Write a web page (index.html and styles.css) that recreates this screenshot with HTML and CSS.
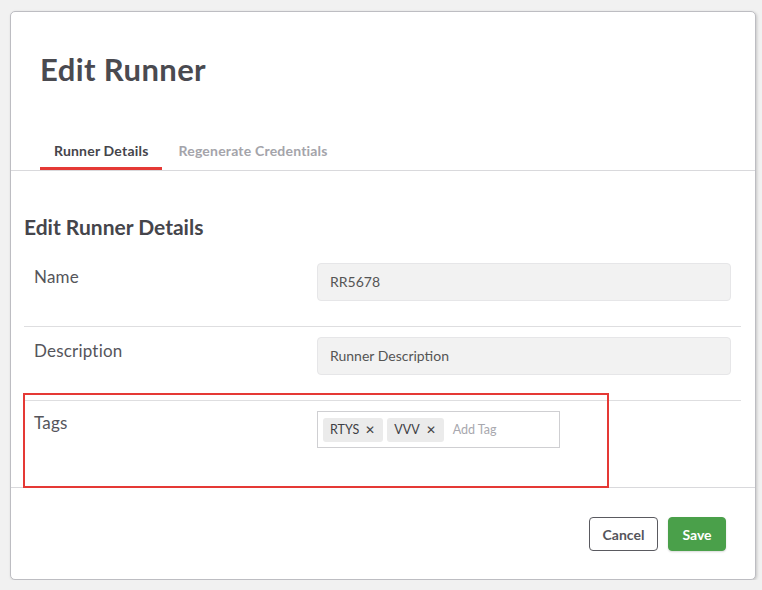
FILE: index.html
```html
<!DOCTYPE html>
<html>
<head>
<meta charset="utf-8">
<link rel="stylesheet" href="styles.css">
</head>
<body>
<div class="card">
  <div class="header">
    <h1 class="title">Edit Runner</h1>
  </div>
  <div class="tabs">
    <div class="tab active">Runner Details</div>
    <div class="tab">Regenerate Credentials</div>
  </div>
  <div class="section">
    <h2 class="section-title">Edit Runner Details</h2>
    <div class="row first">
      <div class="label">Name</div>
      <div class="field">RR5678</div>
    </div>
    <div class="row">
      <div class="label">Description</div>
      <div class="field">Runner Description</div>
    </div>
    <div class="row tags-row">
      <div class="label">Tags</div>
      <div class="tag-input">
        <span class="chip">RTYS <span class="x">✕</span></span>
        <span class="chip">VVV <span class="x">✕</span></span>
        <span class="placeholder">Add Tag</span>
      </div>
      <div class="highlight"></div>
    </div>
  </div>
  <div class="footer">
    <button class="btn cancel">Cancel</button>
    <button class="btn save">Save</button>
  </div>
</div>
</body>
</html>
```

FILE: styles.css
```css
* { box-sizing: border-box; }
html, body { margin: 0; padding: 0; }
body {
  background: #f1f1f1;
  font-family: Lato, "Open Sans", sans-serif;
  color: #555;
  padding: 11px 6px 0 10px;
}
.card {
  width: 746px;
  height: 569px;
  background: #fff;
  border: 1px solid #bdbdc2;
  border-radius: 5px;
  box-shadow: 1px 1px 3px rgba(0,0,0,0.18);
  display: flex;
  flex-direction: column;
}
.header { padding: 38px 0 0 29px; }
.title {
  margin: 0;
  font-size: 31px;
  font-weight: 700;
  line-height: 38px;
  letter-spacing: 0.4px;
  color: #4a4a50;
}
.tabs {
  margin-top: 54px;
  display: flex;
  gap: 2px;
  padding-left: 29px;
  border-bottom: 1px solid #d9d9dc;
}
.tab {
  padding: 0 14px 7px;
  font-size: 14px;
  font-weight: 700;
  line-height: 18px;
  color: #a4a4aa;
  border-bottom: 3px solid transparent;
}
.tab.active {
  color: #45454b;
  letter-spacing: 0.2px;
  border-bottom-color: #e53935;
}
.tab + .tab { padding-left: 14px; letter-spacing: 0.2px; }
.section { padding: 0 14px 0 13px; flex: 1; }
.section-title {
  margin: 43px 0 0 0;
  font-size: 21px;
  font-weight: 700;
  line-height: 26px;
  color: #45454b;
}
.row {
  display: grid;
  grid-template-columns: 293px 1fr;
  padding: 10px 10px 25px 10px;
  border-top: 1px solid #dedee0;
  position: relative;
}
.row.first { border-top: none; padding-top: 11px; margin-top: 12px; }
.label {
  font-size: 17px;
  line-height: 20px;
  letter-spacing: 0.2px;
  color: #55555b;
  margin-top: 4px;
}
.field {
  margin-left: -10px;
  height: 38px;
  background: #f2f2f2;
  border: 1px solid #e6e6e8;
  border-radius: 4px;
  font-size: 14px;
  line-height: 36px;
  padding: 0 12px;
  color: #555;
}
.tags-row { padding-bottom: 25px; }
.tags-row .label { margin-top: 2px; }
.tag-input {
  margin-left: -10px;
  width: 243px;
  height: 37px;
  border: 1px solid #cfcfd2;
  display: flex;
  align-items: center;
  gap: 4px;
  padding: 0 5px;
}
.chip {
  background: #ebebeb;
  border-radius: 3px;
  height: 24px;
  line-height: 24px;
  font-size: 12.5px;
  color: #3e3e44;
  padding: 0 8px 0 7px;
  display: inline-flex;
  align-items: center;
  gap: 6px;
}
.chip .x { font-size: 12px; color: #444; }
.placeholder {
  font-size: 12.5px;
  color: #a8a8ae;
  margin-left: 5px;
}
.highlight {
  position: absolute;
  left: -1px;
  top: -8px;
  width: 586px;
  height: 95px;
  border: 2px solid #e53935;
  pointer-events: none;
}
.footer {
  border-top: 1px solid #d9d9dc;
  display: flex;
  justify-content: flex-end;
  gap: 10px;
  padding: 29px 29px 28px 0;
}
.btn {
  height: 34px;
  font-family: Lato, "Open Sans", sans-serif;
  font-size: 14px;
  font-weight: 700;
  border-radius: 4px;
  padding: 0 10px;
  cursor: pointer;
}
.cancel {
  background: #fff;
  border: 1px solid #5a5a60;
  color: #55555b;
  width: 69px;
}
.save {
  background: #4aa04a;
  border: 1px solid #4aa04a;
  color: #fff;
  width: 58px;
  box-shadow: 0 1px 2px rgba(0,0,0,0.15);
}
```
